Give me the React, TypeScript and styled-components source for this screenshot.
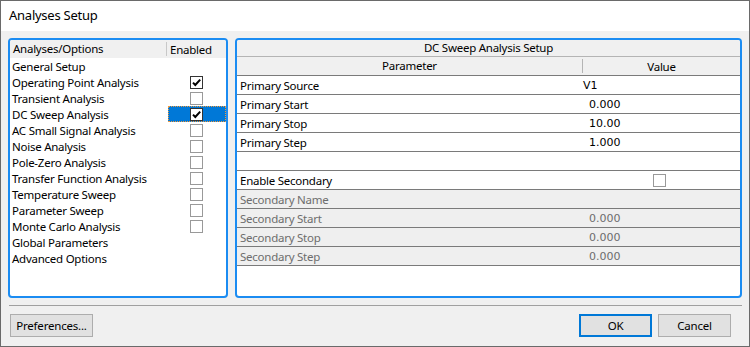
import React from "react";
import styled, { createGlobalStyle } from "styled-components";

const GlobalStyle = createGlobalStyle`
  html, body {
    margin: 0;
    padding: 0;
    background: #f0f0f0;
  }
  * {
    box-sizing: border-box;
  }
`;

const analyses: { name: string; enabled?: boolean; hasBox?: boolean; selected?: boolean }[] = [
  { name: "General Setup" },
  { name: "Operating Point Analysis", hasBox: true, enabled: true },
  { name: "Transient Analysis", hasBox: true },
  { name: "DC Sweep Analysis", hasBox: true, enabled: true, selected: true },
  { name: "AC Small Signal Analysis", hasBox: true },
  { name: "Noise Analysis", hasBox: true },
  { name: "Pole-Zero Analysis", hasBox: true },
  { name: "Transfer Function Analysis", hasBox: true },
  { name: "Temperature Sweep", hasBox: true },
  { name: "Parameter Sweep", hasBox: true },
  { name: "Monte Carlo Analysis", hasBox: true },
  { name: "Global Parameters" },
  { name: "Advanced Options" },
];

type Param = {
  label: string;
  value?: string;
  kind?: "text" | "number" | "check" | "blank";
  disabled?: boolean;
};

const params: Param[] = [
  { label: "Primary Source", value: "V1", kind: "text" },
  { label: "Primary Start", value: "0.000", kind: "number" },
  { label: "Primary Stop", value: "10.00", kind: "number" },
  { label: "Primary Step", value: "1.000", kind: "number" },
  { label: "", kind: "blank" },
  { label: "Enable Secondary", kind: "check" },
  { label: "Secondary Name", disabled: true },
  { label: "Secondary Start", value: "0.000", kind: "number", disabled: true },
  { label: "Secondary Stop", value: "0.000", kind: "number", disabled: true },
  { label: "Secondary Step", value: "0.000", kind: "number", disabled: true },
];

const Check: React.FC<{ checked?: boolean }> = ({ checked }) => (
  <Box $checked={checked}>
    {checked && (
      <svg width="11" height="11" viewBox="0 0 11 11">
        <path d="M2 5.6 L4.3 8 L9.2 2.6" fill="none" stroke="#000" strokeWidth="2" />
      </svg>
    )}
  </Box>
);

export default function App() {
  return (
    <>
      <GlobalStyle />
      <Window>
        <TitleBar>Analyses Setup</TitleBar>
        <Body>
          <Panels>
            <LeftPanel>
              <ListHeader>
                <HeaderName>Analyses/Options</HeaderName>
                <HeaderEnabled>Enabled</HeaderEnabled>
              </ListHeader>
              {analyses.map((a) => (
                <ListRow key={a.name}>
                  <ItemName>{a.name}</ItemName>
                  <EnabledCell $selected={a.selected}>
                    {a.hasBox && <Check checked={a.enabled} />}
                  </EnabledCell>
                </ListRow>
              ))}
            </LeftPanel>
            <RightPanel>
              <GridTitle>DC Sweep Analysis Setup</GridTitle>
              <GridHeader>
                <ParamHead>Parameter</ParamHead>
                <ValueHead>Value</ValueHead>
              </GridHeader>
              {params.map((p, i) => (
                <GridRow key={i} $disabled={p.disabled}>
                  <ParamCell>{p.label}</ParamCell>
                  <ValueCell $kind={p.kind}>
                    {p.kind === "check" ? <Check /> : p.value}
                  </ValueCell>
                </GridRow>
              ))}
            </RightPanel>
          </Panels>
          <Separator />
          <Footer>
            <Button>Preferences...</Button>
            <Spacer />
            <Button $primary $width={73}>OK</Button>
            <Button $width={73}>Cancel</Button>
          </Footer>
        </Body>
      </Window>
    </>
  );
}

const Window = styled.div`
  width: 750px;
  height: 347px;
  border: 1px solid #6a6a6a;
  display: flex;
  flex-direction: column;
  font-family: "Noto Sans", "Liberation Sans", sans-serif;
  font-size: 11.5px;
  letter-spacing: -0.25px;
  color: #000;
  background: #f0f0f0;
`;

const TitleBar = styled.div`
  height: 30px;
  background: #fff;
  display: flex;
  align-items: center;
  padding-left: 8px;
  font-size: 13px;
  padding-bottom: 2px;
`;

const Body = styled.div`
  flex: 1;
  padding: 7px 7px 0 7px;
  display: flex;
  flex-direction: column;
`;

const Panels = styled.div`
  display: flex;
  gap: 7px;
  height: 260px;
`;

const Panel = styled.div`
  border: 2px solid #1b8cf2;
  border-radius: 4px;
  background: #fff;
  overflow: hidden;
`;

const LeftPanel = styled(Panel)`
  width: 220px;
`;

const RightPanel = styled(Panel)`
  flex: 1;
`;

const ListHeader = styled.div`
  height: 18px;
  background: #f0f0f0;
  display: flex;
  align-items: center;
`;

const HeaderName = styled.div`
  width: 157px;
  padding-left: 3px;
  border-right: 1px solid #c8c8c8;
  height: 14px;
  line-height: 14px;
`;

const HeaderEnabled = styled.div`
  padding-left: 3px;
`;

const ListRow = styled.div`
  height: 16px;
  display: flex;
  align-items: center;
  line-height: 15px;
`;

const ItemName = styled.div`
  width: 158px;
  padding-left: 2px;
  white-space: nowrap;
`;

const EnabledCell = styled.div<{ $selected?: boolean }>`
  flex: 1;
  height: 16px;
  display: flex;
  align-items: center;
  justify-content: center;
  padding-right: 1px;
  background: ${({ $selected }) => ($selected ? "#0078d7" : "transparent")};
  border: 1px dotted ${({ $selected }) => ($selected ? "#f09a3e" : "transparent")};
`;

const Box = styled.div<{ $checked?: boolean }>`
  width: 13px;
  height: 13px;
  background: #fff;
  border: 1px solid ${({ $checked }) => ($checked ? "#333" : "#999")};
  display: flex;
  align-items: center;
  justify-content: center;
`;

const GridTitle = styled.div`
  height: 17px;
  background: #f0f0f0;
  border-bottom: 1px solid #b4b4b4;
  text-align: center;
  line-height: 16px;
`;

const GridHeader = styled.div`
  height: 19px;
  background: #f0f0f0;
  border-bottom: 1px solid #7a7a7a;
  display: flex;
  align-items: center;
`;

const ParamHead = styled.div`
  width: 346px;
  text-align: center;
  border-right: 1px solid #b4b4b4;
  height: 14px;
  line-height: 14px;
`;

const ValueHead = styled.div`
  flex: 1;
  text-align: center;
`;

const GridRow = styled.div<{ $disabled?: boolean }>`
  height: 19px;
  display: flex;
  align-items: center;
  border-bottom: 1px solid #7a7a7a;
  background: ${({ $disabled }) => ($disabled ? "#efefef" : "#fff")};
  color: ${({ $disabled }) => ($disabled ? "#6d6d6d" : "#000")};
`;

const ParamCell = styled.div`
  width: 346px;
  padding-left: 3px;
`;

const ValueCell = styled.div<{ $kind?: string }>`
  flex: 1;
  display: flex;
  align-items: center;
  justify-content: ${({ $kind }) => ($kind === "check" ? "center" : "flex-start")};
  padding-left: ${({ $kind }) => ($kind === "number" ? "6px" : "0")};
  padding-right: ${({ $kind }) => ($kind === "check" ? "4px" : "0")};
  font-family: "DejaVu Sans", "Liberation Sans", sans-serif;
  font-size: 11px;
  letter-spacing: 0;
`;

const Separator = styled.div`
  height: 1px;
  background: #a0a0a0;
  margin: 7px 0 0 1px;
`;

const Footer = styled.div`
  display: flex;
  align-items: center;
  gap: 6px;
  padding: 8px 11px 0 2px;
`;

const Spacer = styled.div`
  flex: 1;
`;

const Button = styled.button<{ $primary?: boolean; $width?: number }>`
  height: 23px;
  width: ${({ $width }) => ($width ? `${$width}px` : "83px")};
  background: #e1e1e1;
  border: ${({ $primary }) => ($primary ? "2px solid #0078d7" : "1px solid #adadad")};
  font-family: "Noto Sans", "Liberation Sans", sans-serif;
  font-size: 11.5px;
  letter-spacing: -0.2px;
  color: #000;
  padding: 0;
`;
